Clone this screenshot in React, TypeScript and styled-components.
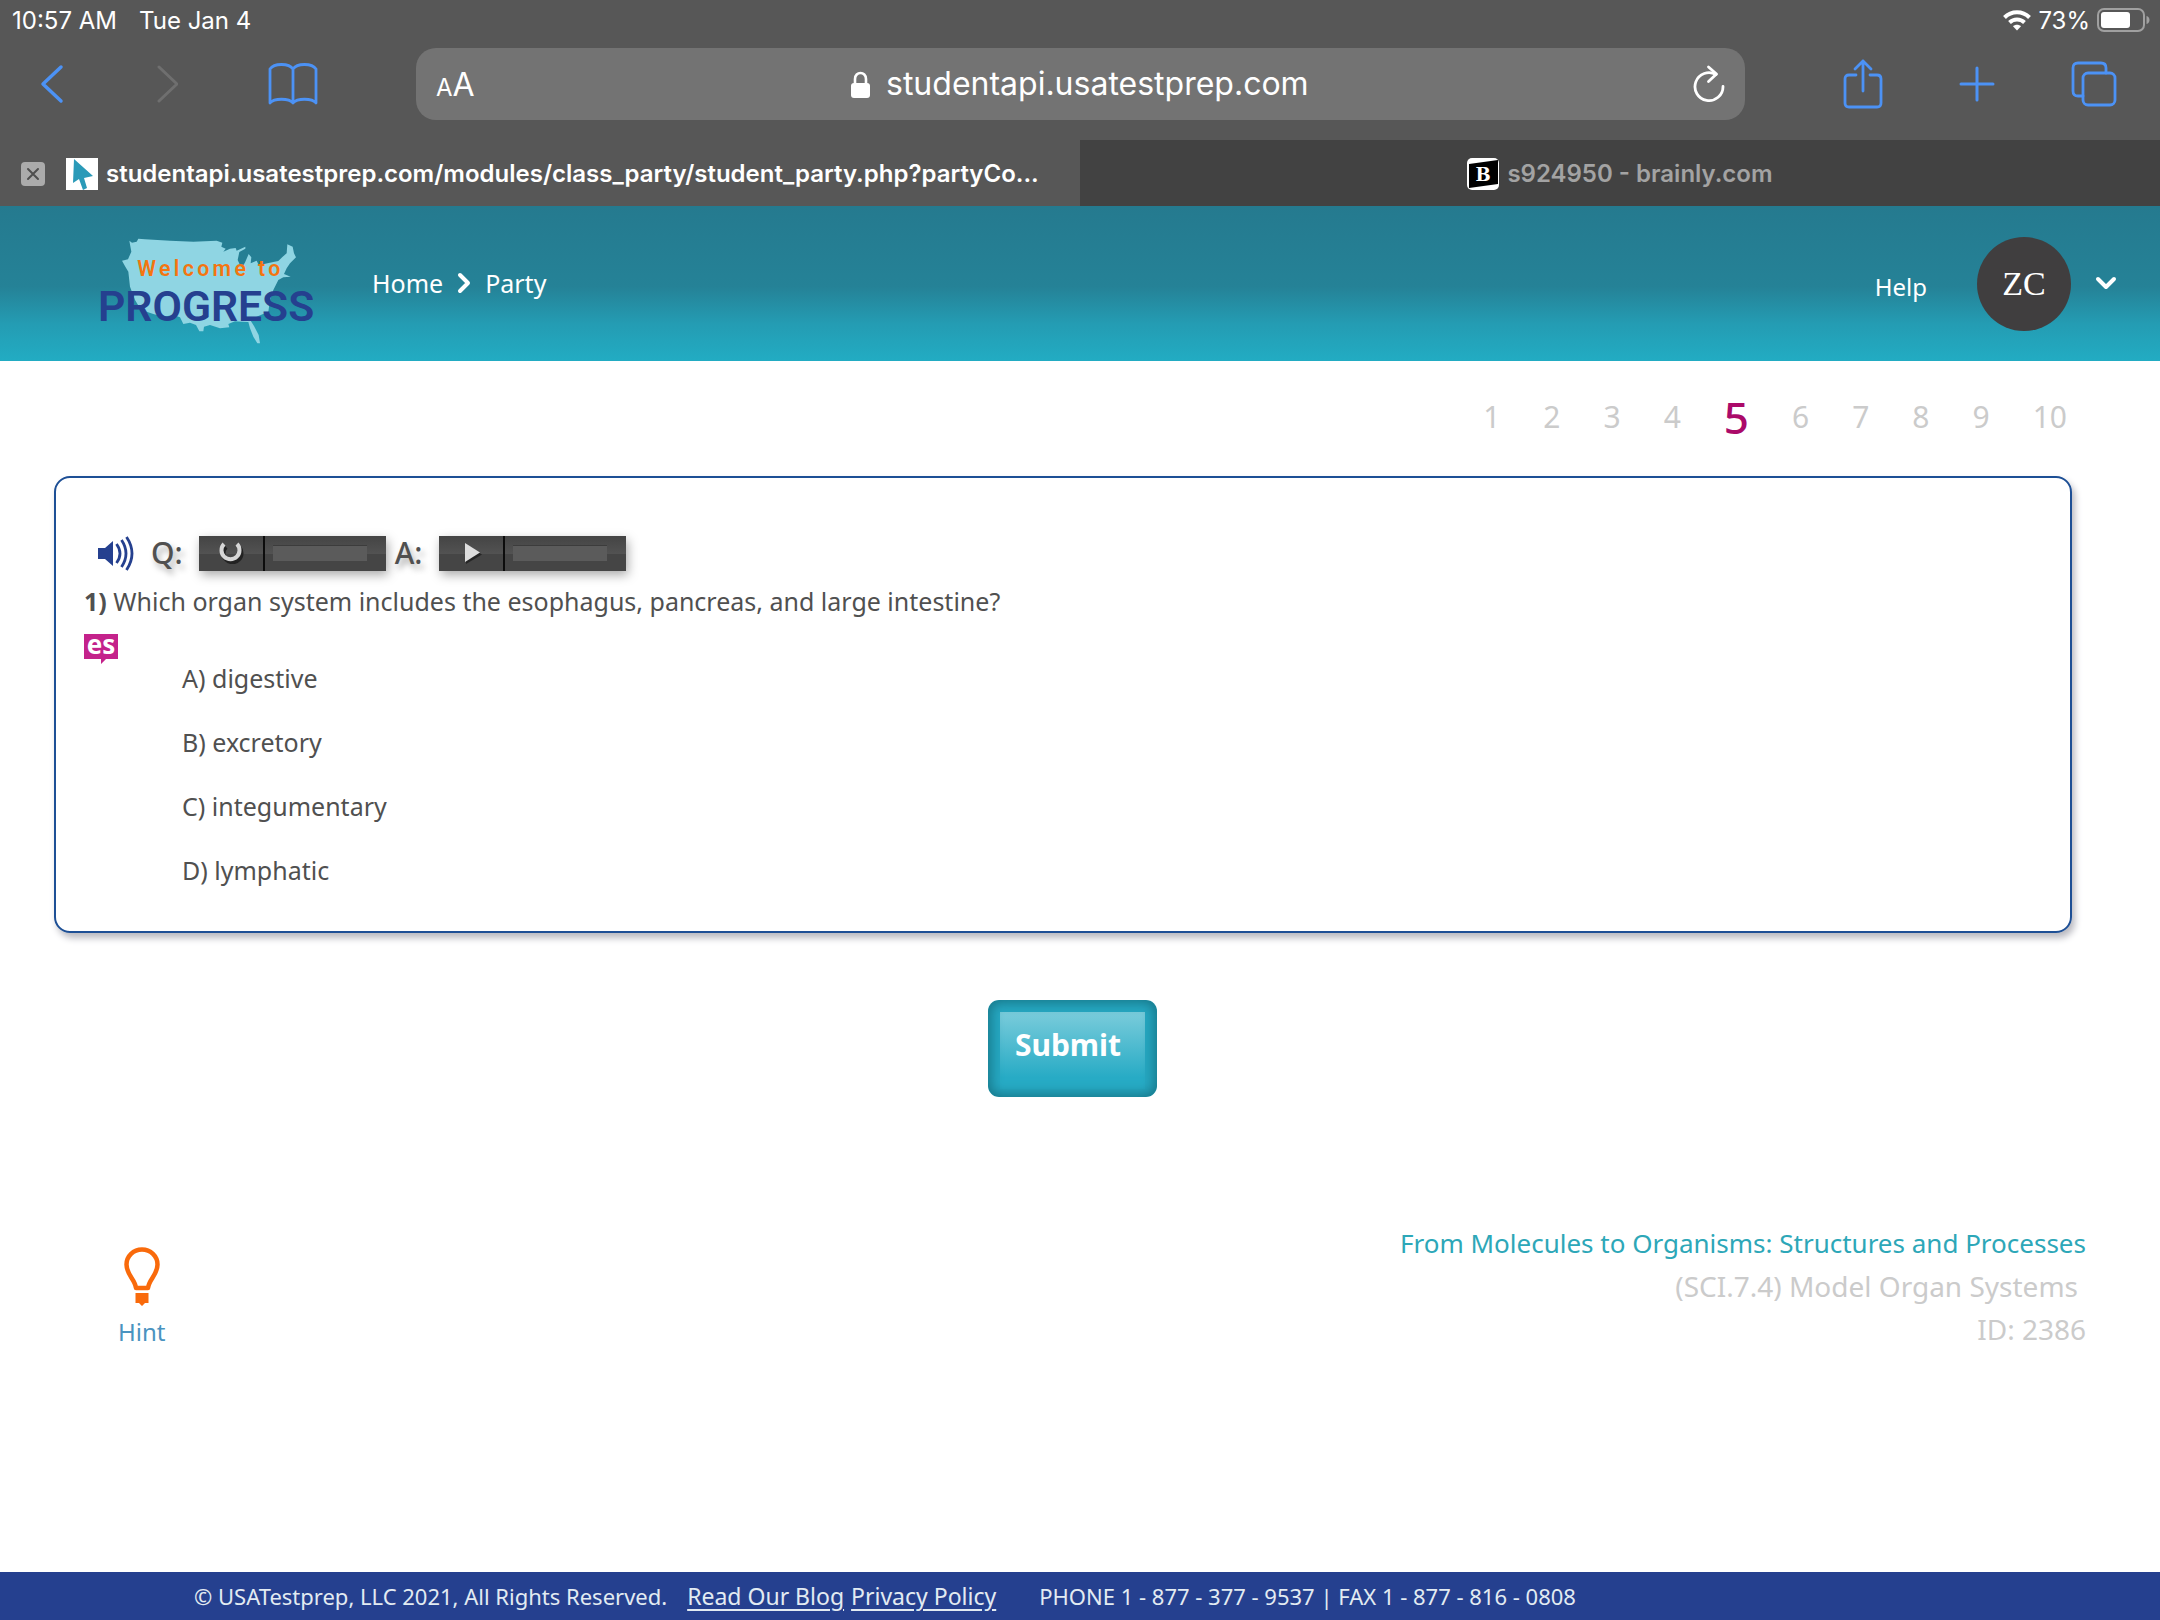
import React, { useState } from "react";
import styled, { createGlobalStyle } from "styled-components";

const ui = `Inter, "Liberation Sans", sans-serif`;
const body = `"Noto Sans", "Open Sans", sans-serif`;

const GlobalStyle = createGlobalStyle`
  *, *::before, *::after { box-sizing: border-box; }
  body { margin: 0; background: #fff; color: #505050; font-family: ${body}; }
  button, input { font: inherit; color: inherit; border: 0; padding: 0; margin: 0; background: none; }
  button { cursor: pointer; }
  a { color: inherit; text-decoration: none; }
  svg { display: block; flex: none; }
`;

const Screen = styled.div`
  display: flex;
  flex-direction: column;
  min-height: 100vh;
`;

/* ---------- browser chrome ---------- */

const Chrome = styled.header`
  background: #575757;
  color: #fff;
  font-family: ${ui};
`;

const StatusBar = styled.div`
  display: flex;
  align-items: center;
  justify-content: space-between;
  height: 40px;
  padding: 0 10px 0 12px;
  font-size: 24px;
`;

const StatusGroup = styled.div<{ $gap: number }>`
  display: flex;
  align-items: center;
  gap: ${(p) => p.$gap}px;
`;

const Toolbar = styled.div`
  display: flex;
  align-items: center;
  height: 100px;
  padding: 0 43px 12px 40px;
`;

const ToolGroup = styled.div<{ $gap: number; $side: "left" | "right" }>`
  display: flex;
  align-items: center;
  gap: ${(p) => p.$gap}px;
  ${(p) => (p.$side === "left" ? "margin-right: 98px;" : "margin-left: 98px;")}
`;

const ToolButton = styled.button<{ $dim?: boolean }>`
  color: ${(p) => (p.$dim ? "#6f6f6f" : "#4c92f5")};
`;

const AddressBar = styled.div`
  display: grid;
  grid-template-columns: 60px 1fr 60px;
  align-items: center;
  flex: 1;
  height: 72px;
  padding: 0 20px;
  border-radius: 20px;
  background: #737373;
`;

const TextSize = styled.button`
  justify-self: start;
  font-size: 32px;
`;

const SmallLetter = styled.span`
  font-size: 24px;
`;

const Address = styled.label`
  display: flex;
  align-items: center;
  justify-content: center;
  gap: 16px;
`;

const AddressInput = styled.input`
  width: 424px;
  font-size: 32px;
  line-height: 44px;
  outline: none;
`;

const ReloadButton = styled.button`
  justify-self: end;
`;

const Tabs = styled.div`
  display: grid;
  grid-template-columns: 1fr 1fr;
`;

const Tab = styled.div<{ $active?: boolean }>`
  display: flex;
  align-items: center;
  justify-content: ${(p) => (p.$active ? "flex-start" : "center")};
  gap: 8px;
  height: 66px;
  padding: 1px 21px 0;
  min-width: 0;
  background: ${(p) => (p.$active ? "transparent" : "#424242")};
  color: ${(p) => (p.$active ? "#fff" : "#a3a3a3")};
  font-size: 24px;
  font-weight: 600;
`;

const TabTitle = styled.span`
  white-space: nowrap;
`;

const CloseTab = styled.button`
  display: grid;
  place-items: center;
  width: 24px;
  height: 24px;
  margin-right: 13px;
  border-radius: 4px;
  background: #ababab;
  color: #4f4f4f;
`;

/* ---------- site header ---------- */

const SiteHeader = styled.div`
  display: flex;
  align-items: center;
  height: 155px;
  padding: 0 43px 0 98px;
  background: linear-gradient(#257a8f 0%, #258297 52%, #249cb3 76%, #22acc3 100%);
  color: #fff;
  font-size: 25px;
`;

const LogoLink = styled.a`
  padding-top: 14px;
`;

const Crumbs = styled.nav`
  display: flex;
  align-items: center;
  gap: 14px;
  margin-left: 49px;
  padding-bottom: 2px;
`;

const Account = styled.div`
  display: flex;
  align-items: center;
  margin-left: auto;
`;

const HelpLink = styled.a`
  padding-top: 6px;
  margin-right: 50px;
  font-size: 24px;
`;

const Avatar = styled.span`
  display: grid;
  place-items: center;
  width: 94px;
  height: 94px;
  margin-right: 24px;
  border-radius: 50%;
  background: #403e3f;
  font-family: "Liberation Serif", serif;
  font-size: 34px;
`;

/* ---------- question ---------- */

const Main = styled.main`
  padding: 0 70px 0 54px;
`;

const Pager = styled.nav`
  display: flex;
  align-items: center;
  justify-content: flex-end;
  gap: 43px;
  height: 115px;
  padding: 0 23px 3px 0;
`;

const PageLink = styled.a<{ $current?: boolean }>`
  color: ${(p) => (p.$current ? "#ab0a69" : "#cbcbcb")};
  font-size: ${(p) => (p.$current ? 44 : 30)}px;
  font-weight: ${(p) => (p.$current ? 500 : 400)};
  line-height: 60px;
`;

const Card = styled.section`
  margin-right: 18px;
  padding: 57px 28px 47px;
  border: 2px solid #1d4f95;
  border-radius: 16px;
  box-shadow: 3px 5px 7px #b9b9c0;
`;

const AudioRow = styled.div`
  display: flex;
  align-items: center;
  height: 36px;
  padding-left: 14px;
`;

const AudioLabel = styled.span`
  font-size: 30px;
  line-height: 36px;
  font-weight: 500;
  text-shadow: 3px 5px 6px #aaa;
`;

const SpeakerButton = styled.button`
  margin-right: 17px;
`;

const Player = styled.div`
  display: flex;
  align-items: center;
  width: 187px;
  height: 35px;
  margin: 0 9px 0 16px;
  background: linear-gradient(#444 0%, #525252 50%, #454545 51%, #454545 100%);
  box-shadow: 2px 4px 10px #aaa;
`;

const PlayButton = styled.button`
  display: grid;
  place-items: center;
  width: 66px;
  height: 35px;
  border-right: 2px solid #0c0c0c;
`;

const Progress = styled.div`
  width: 94px;
  height: 16px;
  margin-left: 8px;
  border-top: 1px solid #3c3c3c;
  background: #5b5b5b;
`;

const Question = styled.p`
  margin: 12px 0 0;
  font-size: 25px;
  line-height: 36px;
`;

const SpanishButton = styled.button`
  display: block;
  margin-top: 7px;
`;

const Choices = styled.fieldset`
  display: flex;
  flex-direction: column;
  gap: 36px;
  margin: 0;
  padding: 0 0 0 98px;
  border: 0;
`;

const Choice = styled.label`
  position: relative;
  font-size: 25px;
  line-height: 28px;
  cursor: pointer;
`;

const ChoiceInput = styled.input`
  position: absolute;
  opacity: 0;
`;

const Submit = styled.button`
  display: block;
  width: 169px;
  height: 97px;
  margin: 67px auto 0;
  padding: 0 8px 8px 0;
  border-radius: 11px;
  background: linear-gradient(#7accdb, #27abc5 85%) 12px 12px / 145px 77px no-repeat #26a7c1;
  box-shadow: inset 0 0 12px 3px #17788a;
  color: #fff;
  font-size: 30px;
  font-weight: 700;
`;

const Details = styled.div`
  display: flex;
  align-items: flex-start;
  justify-content: space-between;
  margin-top: 125px;
  padding: 0 4px 0 64px;
`;

const Hint = styled.button`
  display: flex;
  flex-direction: column;
  align-items: center;
  gap: 8px;
  padding-top: 25px;
  color: #4a93c0;
  font-size: 24px;
  line-height: 36px;
`;

const Standard = styled.div`
  color: #cbcbcb;
  font-size: 28px;
  line-height: 43px;
  text-align: right;
`;

const Topic = styled.a`
  display: block;
  color: #2da7b8;
  font-size: 26px;
`;

const Code = styled.div`
  padding-right: 8px;
`;

const Footer = styled.footer`
  display: flex;
  align-items: center;
  height: 48px;
  margin-top: auto;
  padding-left: 194px;
  background: #25408f;
  color: #e2ebf2;
  font-size: 22px;
`;

const FooterLinks = styled.span`
  display: flex;
  gap: 7px;
  margin: 0 43px 0 20px;
  font-size: 23px;
`;

const FooterLink = styled.a`
  text-decoration: underline;
  text-underline-offset: 4px;
`;

/* ---------- drawings ---------- */

const line = { fill: "none", stroke: "currentColor", strokeLinecap: "round", strokeLinejoin: "round" } as const;

const WifiIcon = () => (
  <svg width="28" height="21" viewBox="0 0 28 21" fill="none" stroke="#fff" strokeWidth="4">
    <path d="M1.500 7.500C8.500 .5 19.500 .5 26.500 7.500" />
    <path d="M6.500 12.500C10.800 8.500 17.200 8.500 21.500 12.500" />
    <path d="M14 20.500 10 16.200C12.200 14.200 15.800 14.200 18 16.200Z" fill="#fff" stroke="none" />
  </svg>
);

const BatteryIcon = () => (
  <svg width="53" height="24" viewBox="0 0 53 24">
    <rect x="1" y="1" width="46" height="22" rx="6" fill="none" stroke="#a0a0a0" strokeWidth="2" />
    <rect x="4" y="4" width="29" height="16" rx="3" fill="#fff" />
    <path d="M49.500 8c4 1 4 7 0 8Z" fill="#a0a0a0" />
  </svg>
);

const BackIcon = () => (
  <svg width="24" height="40" viewBox="0 0 24 40" {...line} strokeWidth="3.500"><path d="M21 3 3 20l18 17" /></svg>
);
const ForwardIcon = () => (
  <svg width="24" height="40" viewBox="0 0 24 40" {...line} strokeWidth="3"><path d="m5 3 18 17L5 37" /></svg>
);
const BookIcon = () => (
  <svg width="50" height="44" viewBox="0 0 50 44" {...line} strokeWidth="2.800">
    <path d="M25 7C21 1 6 1 2 7V41C6 36 21 36 25 41C29 36 44 36 48 41V7C44 1 29 1 25 7V41" />
  </svg>
);
const LockIcon = () => (
  <svg width="19" height="27" viewBox="0 0 19 27">
    <path d="M4 13V8C4 0 15 0 15 8v5" fill="none" stroke="#fff" strokeWidth="2.600" />
    <rect y="12" width="19" height="15" rx="3" fill="#fff" />
  </svg>
);
const ReloadIcon = () => (
  <svg width="32" height="38" viewBox="0 0 32 38" {...line} strokeWidth="2.800">
    <path d="M30 21.500A14 14 0 1 1 23 9.500" />
    <path d="m15.500 2 8 7-8 7.500" />
  </svg>
);
const ShareIcon = () => (
  <svg width="40" height="50" viewBox="0 0 40 50" {...line} strokeWidth="2.800">
    <path d="M13 16H6q-4 0-4 4v24q0 4 4 4h28q4 0 4-4V20q0-4-4-4h-7" />
    <path d="M20 32V2M12 10l8-8 8 8" />
  </svg>
);
const PlusIcon = () => (
  <svg width="36" height="36" viewBox="0 0 36 36" {...line} strokeWidth="3"><path d="M18 2v32M2 18h32" /></svg>
);
const TabsIcon = () => (
  <svg width="46" height="46" viewBox="0 0 46 46" {...line} strokeWidth="2.800">
    <rect x="12" y="12" width="32" height="32" rx="5" />
    <path d="M12 35H7q-5 0-5-5V7q0-5 5-5h23q5 0 5 5v5" />
  </svg>
);
const CrossIcon = () => (
  <svg width="14" height="14" viewBox="0 0 14 14" {...line} strokeWidth="2"><path d="m2 2 10 10M12 2 2 12" /></svg>
);
const CursorFavicon = () => (
  <svg width="32" height="32" viewBox="0 0 32 32">
    <path fill="#fff" d="M0 0h32v32H0z" />
    <path fill="#2a9ab8" d="M8 1 27 18l-9 2 3 10-4 2-4-11-6 4Z" />
  </svg>
);
const BrainlyFavicon = () => (
  <svg width="32" height="32" viewBox="0 0 32 32">
    <rect width="32" height="32" rx="5" fill="#fff" />
    <path d="M2 6 31 2v24L2 30Z" />
    <text x="16" y="23" textAnchor="middle" fill="#fff" fontFamily="DejaVu Serif, serif" fontSize="18" fontWeight="700">B</text>
  </svg>
);

/* the outline of the lower 48 states behind the two lines of the word mark */
const Logo = () => (
  <svg width="225" height="110" viewBox="114 108 675 330" role="img" aria-label="Welcome to Progress">
    <path
      fill="#8fd5e3"
      d="m208 122 8 6 14-3 5-9 20 2 75 4 70 3 70-3 17 6-3 12 13 6-7 9 20-9 17-2 3 8 26-12v6l-18 10-5 24 7 15 8 5 8-15 10-23 8 10-2 18 18-8 6 13 16-3 28-6 15-3 13-13 12-10 2-27 16 7 4 20 6 12-18 18-10 15-8 17 20 8-22 2-15 8-15 30-10 30-5 35-35 15-18 12 10 16 14 27 4 25h-8l-12-20-10-25-5-19-20-1-20-1-20 8 3 10-28 3-30-10-18 5-2 14h-12l-10-19-18-7-20 4-10-20-20-7-30 5-30-8-18-6-22-11-15-25-15-40-5-45-9-15-10-18 18-4 10-23Z"
    />
    <text x="232" y="227" fill="#f47510" fontFamily="Roboto, sans-serif" fontSize="64" fontWeight="600" letterSpacing="10">Welcome to</text>
    <text x="114" y="362" fill="#25408f" fontFamily="Roboto, sans-serif" fontSize="128" fontWeight="600">PROGRESS</text>
  </svg>
);

const CrumbArrow = () => (
  <svg width="14" height="22" viewBox="0 0 14 22" {...line} strokeWidth="4"><path d="m3 3 8 8-8 8" /></svg>
);
const DownIcon = () => (
  <svg width="22" height="15" viewBox="0 0 22 15" {...line} strokeWidth="4"><path d="m3 3 8 8 8-8" /></svg>
);
const SpeakerIcon = () => (
  <svg width="36" height="35" viewBox="0 0 36 35" fill="none" stroke="#25408f" strokeWidth="2.800">
    <path d="M0 12h7l8-7v25l-8-7H0Z" fill="#25408f" stroke="none" />
    <path d="M18.500 8q7 9.500 0 19M23.500 4q9 13.500 0 27M28.500 1q11 16.500 0 33" />
  </svg>
);
const LoadingIcon = () => (
  <svg width="26" height="22" viewBox="0 0 26 22" fill="none" strokeWidth="4">
    <path d="M7 3a9 9 0 1 0 13 0" stroke="#222" transform="translate(1 2)" />
    <path d="M6 2a9 9 0 1 0 13 0" stroke="#d6d6d6" />
  </svg>
);
const PlayIcon = () => (
  <svg width="22" height="22" viewBox="0 0 22 22">
    <path d="m6 3 16 9.500L6 22Z" fill="#262626" />
    <path d="m5 1 15 9.500L5 20Z" fill="#dedede" />
  </svg>
);
const SpanishIcon = () => (
  <svg width="34" height="38" viewBox="0 -8 34 38">
    <path d="M0 0h34v25H22l-5 5v-5H0Z" fill="#c4228b" />
    <text x="17" y="20" textAnchor="middle" fill="#fff" fontFamily="Noto Sans, sans-serif" fontSize="26" fontWeight="700">es</text>
  </svg>
);
const BulbIcon = () => (
  <svg width="36" height="59" viewBox="0 0 36 59">
    <path d="M12 41C11 32 2.500 28 2.500 17.500a15.500 15 0 0 1 31 0C33.500 28 25 32 24 41Z" fill="none" stroke="#f96a0b" strokeWidth="4.500" strokeLinejoin="round" />
    <path d="M11.500 46h13v10h-3.500l-3 3-3-3h-3.500Z" fill="#f96a0b" />
  </svg>
);

/* ---------- page ---------- */

const pages = [1, 2, 3, 4, 5, 6, 7, 8, 9, 10];
const choices = [
  ["A", "digestive"],
  ["B", "excretory"],
  ["C", "integumentary"],
  ["D", "lymphatic"],
];

export default function App() {
  const [answer, setAnswer] = useState("");
  return (
    <Screen>
      <GlobalStyle />
      <Chrome>
        <StatusBar>
          <StatusGroup $gap={22}>
            <span>10:57 AM</span>
            <span>Tue Jan 4</span>
          </StatusGroup>
          <StatusGroup $gap={7}>
            <WifiIcon />
            <span>73%</span>
            <BatteryIcon />
          </StatusGroup>
        </StatusBar>
        <Toolbar>
          <ToolGroup $gap={90} $side="left">
            <ToolButton aria-label="Back"><BackIcon /></ToolButton>
            <ToolButton aria-label="Forward" $dim><ForwardIcon /></ToolButton>
            <ToolButton aria-label="Bookmarks"><BookIcon /></ToolButton>
          </ToolGroup>
          <AddressBar>
            <TextSize aria-label="Text size"><SmallLetter>A</SmallLetter>A</TextSize>
            <Address>
              <LockIcon />
              <AddressInput aria-label="Address" defaultValue="studentapi.usatestprep.com" />
            </Address>
            <ReloadButton aria-label="Reload"><ReloadIcon /></ReloadButton>
          </AddressBar>
          <ToolGroup $gap={76} $side="right">
            <ToolButton aria-label="Share"><ShareIcon /></ToolButton>
            <ToolButton aria-label="New tab"><PlusIcon /></ToolButton>
            <ToolButton aria-label="Show tabs"><TabsIcon /></ToolButton>
          </ToolGroup>
        </Toolbar>
        <Tabs>
          <Tab $active>
            <CloseTab aria-label="Close tab"><CrossIcon /></CloseTab>
            <CursorFavicon />
            <TabTitle>studentapi.usatestprep.com/modules/class_party/student_party.php?partyCo...</TabTitle>
          </Tab>
          <Tab>
            <BrainlyFavicon />
            <TabTitle>s924950 - brainly.com</TabTitle>
          </Tab>
        </Tabs>
      </Chrome>

      <SiteHeader>
        <LogoLink href="#home"><Logo /></LogoLink>
        <Crumbs>
          <a href="#home">Home</a>
          <CrumbArrow />
          <a href="#party">Party</a>
        </Crumbs>
        <Account>
          <HelpLink href="#help">Help</HelpLink>
          <Avatar>ZC</Avatar>
          <button aria-label="Account menu"><DownIcon /></button>
        </Account>
      </SiteHeader>

      <Main>
        <Pager>
          {pages.map((n) => (
            <PageLink key={n} href={`#q${n}`} $current={n === 5}>{n}</PageLink>
          ))}
        </Pager>
        <Card>
          <AudioRow>
            <SpeakerButton aria-label="Read aloud"><SpeakerIcon /></SpeakerButton>
            <AudioLabel>Q:</AudioLabel>
            <Player>
              <PlayButton aria-label="Loading question audio"><LoadingIcon /></PlayButton>
              <Progress />
            </Player>
            <AudioLabel>A:</AudioLabel>
            <Player>
              <PlayButton aria-label="Play answers"><PlayIcon /></PlayButton>
              <Progress />
            </Player>
          </AudioRow>
          <Question><strong>1)</strong> Which organ system includes the esophagus, pancreas, and large intestine?</Question>
          <SpanishButton aria-label="Show in Spanish"><SpanishIcon /></SpanishButton>
          <Choices aria-label="Answers">
            {choices.map(([letter, text]) => (
              <Choice key={letter}>
                <ChoiceInput type="radio" name="answer" checked={answer === letter} onChange={() => setAnswer(letter)} />
                {letter}) {text}
              </Choice>
            ))}
          </Choices>
        </Card>
        <Submit>Submit</Submit>
        <Details>
          <Hint><BulbIcon />Hint</Hint>
          <Standard>
            <Topic href="#topic">From Molecules to Organisms: Structures and Processes</Topic>
            <Code>(SCI.7.4) Model Organ Systems</Code>
            <div>ID: 2386</div>
          </Standard>
        </Details>
      </Main>

      <Footer>
        <span>© USATestprep, LLC 2021, All Rights Reserved.</span>
        <FooterLinks>
          <FooterLink href="#blog">Read Our Blog</FooterLink>
          <FooterLink href="#privacy">Privacy Policy</FooterLink>
        </FooterLinks>
        <span>PHONE 1 - 877 - 377 - 9537 | FAX 1 - 877 - 816 - 0808</span>
      </Footer>
    </Screen>
  );
}
